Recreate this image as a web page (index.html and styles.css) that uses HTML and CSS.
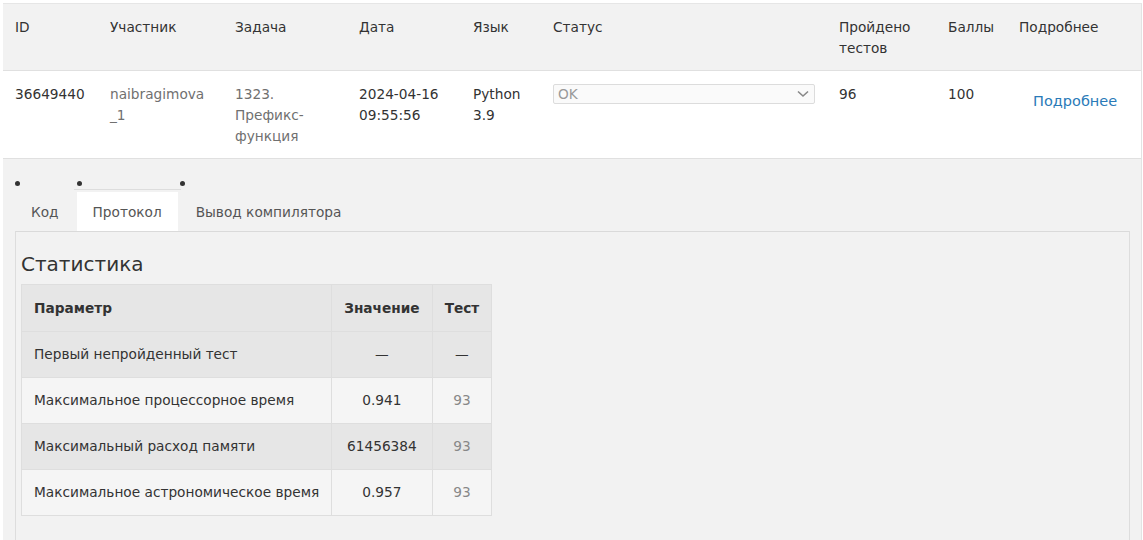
FILE: index.html
```html
<!DOCTYPE html>
<html lang="ru">
<head>
<meta charset="utf-8">
<title>Посылка</title>
<link rel="stylesheet" href="styles.css">
</head>
<body>
<div class="wrap">
  <table class="runs">
    <colgroup>
      <col class="c-id"><col class="c-user"><col class="c-task"><col class="c-date"><col class="c-lang"><col class="c-status"><col class="c-tests"><col class="c-score"><col class="c-more">
    </colgroup>
    <thead>
      <tr>
        <th>ID</th><th>Участник</th><th>Задача</th><th>Дата</th><th>Язык</th><th>Статус</th><th>Пройдено тестов</th><th>Баллы</th><th>Подробнее</th>
      </tr>
    </thead>
    <tbody>
      <tr>
        <td>36649440</td>
        <td><a class="muted" href="#">naibragimova<br>_1</a></td>
        <td><a class="muted" href="#">1323.<br>Префикс-<br>функция</a></td>
        <td>2024-04-16<br>09:55:56</td>
        <td>Python<br>3.9</td>
        <td>
          <div class="select"><span>OK</span>
            <svg class="chev" width="12" height="8" viewBox="0 0 12 8"><path d="M1 1.5 L6 6 L11 1.5" fill="none" stroke="#888" stroke-width="1.6"/></svg>
          </div>
        </td>
        <td>96</td>
        <td>100</td>
        <td><a class="more" href="#">Подробнее</a></td>
      </tr>
    </tbody>
  </table>

  <div class="details">
    <ul class="tabs">
      <li class="tab"><span class="dot"></span><a href="#" class="tab-link">Код</a></li>
      <li class="tab active"><span class="dot"></span><a href="#" class="tab-link">Протокол</a></li>
      <li class="tab"><span class="dot"></span><a href="#" class="tab-link">Вывод компилятора</a></li>
    </ul>
    <div class="panel">
      <h3 class="title">Статистика</h3>
      <table class="stats">
        <thead>
          <tr><th class="left">Параметр</th><th>Значение</th><th>Тест</th></tr>
        </thead>
        <tbody>
          <tr class="dark"><td class="left">Первый непройденный тест</td><td>—</td><td>—</td></tr>
          <tr class="light"><td class="left">Максимальное процессорное время</td><td>0.941</td><td class="test">93</td></tr>
          <tr class="dark"><td class="left">Максимальный расход памяти</td><td>61456384</td><td class="test">93</td></tr>
          <tr class="light"><td class="left">Максимальное астрономическое время</td><td>0.957</td><td class="test">93</td></tr>
        </tbody>
      </table>
    </div>
  </div>
</div>
</body>
</html>
```

FILE: styles.css
```css
html, body {
  margin: 0;
  padding: 0;
  background: #ffffff;
}
body {
  font-family: "DejaVu Sans", Verdana, sans-serif;
  font-size: 13.7px;
  line-height: 21px;
  color: #333333;
  padding: 3px 1px 0 3px;
}
.wrap {
  background: #f2f2f2;
  border-top: 1px solid #e6e6e6;
  border-right: 1px solid #e3e3e3;
  height: 560px;
  overflow: hidden;
}
.runs {
  width: 100%;
  border-collapse: collapse;
  table-layout: fixed;
}
.c-id { width: 95px; }
.c-user { width: 125px; }
.c-task { width: 124px; }
.c-date { width: 114px; }
.c-lang { width: 80px; }
.c-status { width: 286px; }
.c-tests { width: 109px; }
.c-score { width: 71px; }
.runs th {
  font-weight: normal;
  text-align: left;
  vertical-align: top;
  padding: 13px 12px 11px 12px;
  background: #f2f2f2;
  border-bottom: 1px solid #e0e0e0;
}
.runs td {
  vertical-align: top;
  padding: 13px 12px 11px 12px;
  background: #ffffff;
  border-bottom: 1px solid #e0e0e0;
}
.muted {
  color: #707070;
  text-decoration: none;
}
.select {
  margin-top: 0;
  height: 18px;
  border: 1px solid #dcdcdc;
  border-radius: 2px;
  background: #fafafa;
  display: flex;
  align-items: center;
  justify-content: space-between;
  padding: 0 5px 0 4px;
  color: #999999;
  line-height: 18px;
}
.chev { display: block; }
.more {
  display: inline-block;
  font-size: 14.5px;
  color: #2a7ab8;
  text-decoration: none;
  padding: 7px 0 0 14px;
}
.details {
  padding: 22px 11px 0 12px;
}
.tabs {
  list-style: none;
  margin: 0;
  padding: 0;
  display: flex;
}
.tab {
  display: flex;
  flex-direction: column;
  align-items: flex-start;
  margin-right: 2px;
}
.dot {
  order: 0;
  width: 5px;
  height: 5px;
  border-radius: 50%;
  background: #333333;
}
.tab.active::before {
  content: "";
  display: block;
  order: 1;
  height: 1px;
  background: #dddddd;
  margin: 3px -3px 0 -3px;
  align-self: stretch;
}
.tab-link {
  order: 2;
  display: block;
  margin-top: 6px;
  padding: 10px 15px 8px 15px;
  color: #555555;
  text-decoration: none;
  border: 1px solid transparent;
  border-bottom: none;
  border-top: none;
}
.tab.active .tab-link {
  background: #ffffff;
  margin-top: 2px;
}
.panel {
  border: 1px solid #dddddd;
  border-top-color: #dadada;
  background: #f2f2f2;
  padding: 19px 0 0 5px;
  height: 400px;
}
.title {
  margin: 0 0 7px 0;
  font-size: 20px;
  font-weight: normal;
  line-height: 26px;
  color: #333333;
}
.stats {
  border-collapse: collapse;
  border: 1px solid #dedede;
}
.stats th, .stats td {
  padding: 12px 12px;
  text-align: center;
  border: 1px solid #dedede;
  white-space: nowrap;
}
.stats th {
  font-weight: bold;
  background: #e6e6e6;
  padding-top: 13px;
}
.stats .left {
  text-align: left;
  width: 285px;
}
.stats tr.dark td { background: #e6e6e6; }
.stats tr.light td { background: #f5f5f5; }
.stats td.test { color: #888888; }
```
